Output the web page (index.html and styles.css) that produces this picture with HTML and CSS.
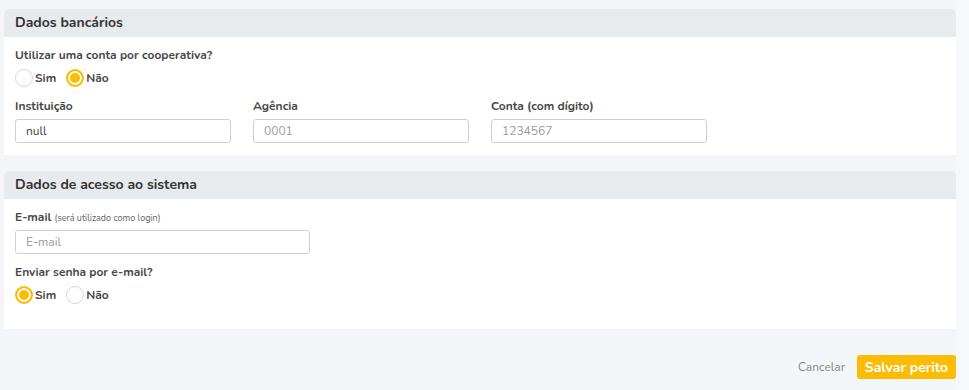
FILE: index.html
```html
<!DOCTYPE html>
<html lang="pt-BR">
  <head>
    <meta charset="UTF-8">
    <title>Cadastro de perito</title>
    <link rel="stylesheet" href="styles.css">
  </head>
  <body>
    <div id="main">
      <div class="card">
        <div class="card-head">Dados bancários</div>
        <div class="card-body">
          <div class="field-label">Utilizar uma conta por cooperativa?</div>
          <div class="radios">
            <label class="radio"><span class="dot"></span>Sim</label>
            <label class="radio on"><span class="dot"></span>Não</label>
          </div>
          <div class="cols">
            <div class="col">
              <div class="field-label">Instituição</div>
              <input class="inp filled" type="text" value="null">
            </div>
            <div class="col">
              <div class="field-label">Agência</div>
              <input class="inp" type="text" placeholder="0001">
            </div>
            <div class="col">
              <div class="field-label">Conta (com dígito)</div>
              <input class="inp" type="text" placeholder="1234567">
            </div>
          </div>
        </div>
      </div>

      <div class="card">
        <div class="card-head">Dados de acesso ao sistema</div>
        <div class="card-body tall">
          <div class="field-label">E-mail <small>(será utilizado como login)</small></div>
          <input class="inp wide" type="text" placeholder="E-mail">
          <div class="field-label second">Enviar senha por e-mail?</div>
          <div class="radios">
            <label class="radio on"><span class="dot"></span>Sim</label>
            <label class="radio"><span class="dot"></span>Não</label>
          </div>
        </div>
      </div>

      <div class="actions">
        <a href="#" class="cancel">Cancelar</a>
        <button class="save">Salvar perito</button>
      </div>
    </div>
  </body>
</html>
```

FILE: styles.css
```css
* {padding: 0; margin: 0; box-sizing: border-box}
html {background: #f7f8fb;}
body {
  font-family: "Nunito", "Lato", "Open Sans", sans-serif;
  color: #3a3a3a;
}
#main{
  width: 956px;
  height: 390px;
  background: #f4f5f9;
  padding: 9px 0 0 4px;
}
.card{
  background: #fff;
  border-radius: 5px 5px 0 0;
  margin-bottom: 16px;
}
.card-head{
  height: 28px;
  line-height: 28px;
  background: #e8ebee;
  border-radius: 5px 5px 0 0;
  padding-left: 11px;
  font-size: 14px;
  font-weight: 700;
  color: #333;
}
.card-body{
  padding: 11px 11px 12px;
}
.card-body.tall{
  padding-bottom: 25px;
}
.field-label{
  font-size: 12px;
  font-weight: 700;
  color: #484848;
  line-height: 14px;
}
.field-label small{
  font-size: 9px;
  font-weight: 400;
  color: #666;
}
.field-label.second{
  margin-top: 11px;
}
.radios{
  display: flex;
  gap: 10px;
  margin-top: 7px;
  height: 18px;
}
.radio{
  display: flex;
  align-items: center;
  gap: 2px;
  font-size: 12px;
  font-weight: 700;
  color: #484848;
}
.dot{
  width: 18px;
  height: 18px;
  border-radius: 50%;
  border: 1px solid #d8d8d8;
  background: #fff;
}
.radio.on .dot{
  border: 2px solid #fbbc05;
  box-shadow: inset 0 0 0 2px #fff;
  background: #fbbc05;
}
.cols{
  display: flex;
  gap: 22px;
  margin-top: 12px;
}
.col .field-label{
  margin-bottom: 6px;
}
.inp{
  display: block;
  width: 216px;
  height: 24px;
  border: 1px solid #cfcfcf;
  border-radius: 3px;
  padding-left: 10px;
  font-family: inherit;
  font-size: 12px;
  color: #444;
  outline: none;
}
.inp::placeholder{
  color: #9a9a9a;
}
.inp.wide{
  width: 295px;
  margin-top: 5px;
}
.actions{
  display: flex;
  justify-content: flex-end;
  align-items: center;
  gap: 12px;
  margin-top: 26px;
}
.actions .cancel{
  font-size: 12px;
  color: #888;
  text-decoration: none;
}
.save{
  width: 99px;
  height: 24px;
  border: none;
  border-radius: 3px;
  background: #fbbc05;
  color: #fff;
  font-family: inherit;
  font-size: 14px;
  font-weight: 700;
}
```
